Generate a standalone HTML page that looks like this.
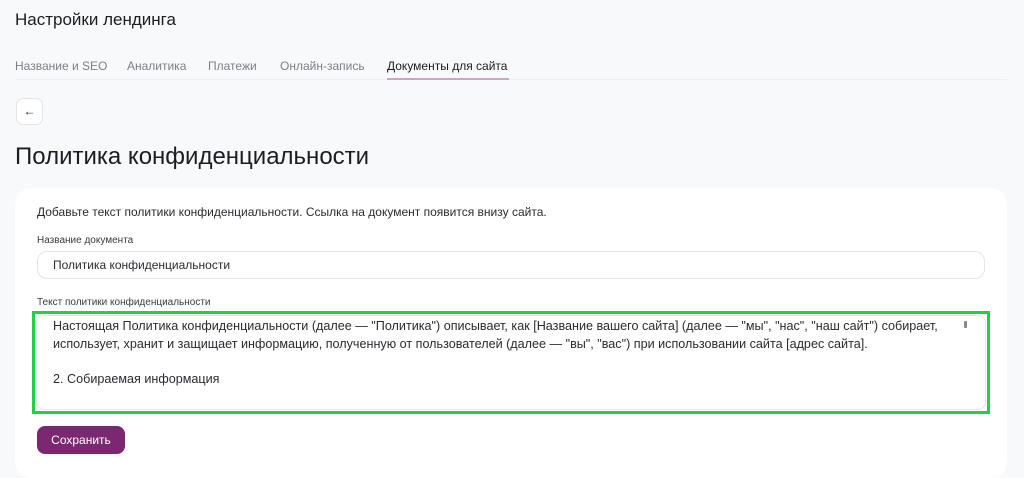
<!DOCTYPE html>
<html><head><meta charset="utf-8"><style>
*{box-sizing:border-box;margin:0;padding:0}
body{width:1024px;height:463px;overflow:hidden;background:#f8f9fb;font-family:"Liberation Sans",sans-serif;color:#1c1d22;position:relative}
.a{position:absolute;white-space:nowrap}
</style></head><body>
<div class="a" style="left:15px;top:10px;font-size:17px;">Настройки лендинга</div>
<div class="a" style="left:15px;top:59px;font-size:12px;color:#7d7f86">Название и SEO</div>
<div class="a" style="left:127px;top:59px;font-size:12px;color:#7d7f86">Аналитика</div>
<div class="a" style="left:208px;top:59px;font-size:12px;color:#7d7f86">Платежи</div>
<div class="a" style="left:280px;top:59px;font-size:12px;color:#7d7f86">Онлайн-запись</div>
<div class="a" style="left:387px;top:59px;font-size:12px;color:#1c1d22">Документы для сайта</div>
<div class="a" style="left:15px;top:79px;width:992px;height:1px;background:#eceef1"></div>
<div class="a" style="left:387px;top:78px;width:122px;height:2px;background:#c9a6c3"></div>
<div class="a" style="left:16px;top:98px;width:27px;height:27px;border:1px solid #e3e4e8;border-radius:7px;background:#fff;font-size:12px;text-align:center;line-height:24px">←</div>
<div class="a" style="left:15px;top:143px;font-size:24px;">Политика конфиденциальности</div>
<div class="a" style="left:15px;top:188px;width:992px;height:290px;background:#fff;border-radius:16px"></div>
<div class="a" style="left:37px;top:205px;font-size:12px;color:#2a2b30">Добавьте текст политики конфиденциальности. Ссылка на документ появится внизу сайта.</div>
<div class="a" style="left:37px;top:235px;font-size:10px;color:#3a3b40">Название документа</div>
<div class="a" style="left:37px;top:251px;width:948px;height:28px;border:1px solid #e4e5e8;border-radius:10px;background:#fff"></div>
<div class="a" style="left:53px;top:258px;font-size:12px;color:#2a2b30">Политика конфиденциальности</div>
<div class="a" style="left:37px;top:297px;font-size:10px;color:#3a3b40">Текст политики конфиденциальности</div>
<div class="a" style="left:32px;top:311px;width:958px;height:103px;border:3px solid #22d044"></div>
<div class="a" style="left:36px;top:315px;width:950px;height:95px;border:1px solid #e4e5e8;border-radius:8px;background:#fff"></div>
<div class="a" style="left:53px;top:318px;font-size:12.6px;line-height:17.5px;color:#2a2b30">Настоящая Политика конфиденциальности (далее — "Политика") описывает, как [Название вашего сайта] (далее — "мы", "нас", "наш сайт") собирает,<br>использует, хранит и защищает информацию, полученную от пользователей (далее — "вы", "вас") при использовании сайта [адрес сайта].<br><br>2. Собираемая информация</div>
<div class="a" style="left:964px;top:321px;width:3px;height:7px;background:#888;border-radius:1px"></div>
<div class="a" style="left:37px;top:426px;width:88px;height:28px;background:#7b2870;border-radius:8px;color:#fff;font-size:12px;text-align:center;line-height:28px">Сохранить</div>
</body></html>
